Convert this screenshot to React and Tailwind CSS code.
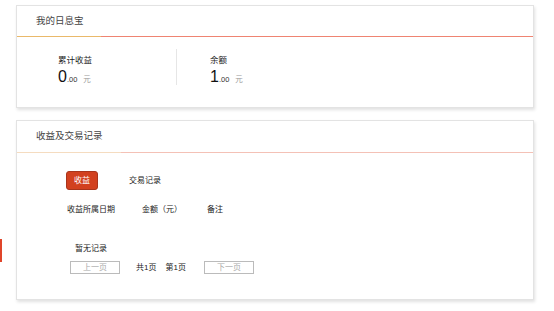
export default function App() {
  return (
    <div className="relative w-[554px] h-[311px] bg-white text-[#333] font-['Liberation_Sans','Noto_Sans_CJK_SC',sans-serif] pl-[16px] pt-[5px]">
      <div className="absolute left-0 top-[239px] w-[2px] h-[23px] bg-[#e0452a]" />
      {/* Card 1 */}
      <div className="w-[518px] h-[103px] border border-[#e3e3e3] bg-white shadow-[1px_2px_3px_rgba(0,0,0,0.12)] flex flex-col">
        <div className="h-[30px] flex items-center pl-[19px] text-[9.5px] text-[#444]">我的日息宝</div>
        <div className="flex h-px">
          <div className="w-[84px] bg-[#eab96a]" />
          <div className="flex-1 bg-[#ef8472]" />
        </div>
        <div className="flex pt-[17px] pl-[41px]">
          <div className="w-[118px] flex flex-col">
            <div className="text-[8.5px] leading-[12px] text-[#222]">累计收益</div>
            <div className="flex items-baseline mt-[2px]">
              <span className="text-[16px] leading-[17px] text-[#111]">0</span>
              <span className="text-[7.5px] text-[#333]">.00</span>
              <span className="text-[7.5px] text-[#999] ml-[6px]">元</span>
            </div>
          </div>
          <div className="w-px h-[36px] -mt-[5px] bg-[#e6e6e6]" />
          <div className="flex flex-col pl-[33px]">
            <div className="text-[8.5px] leading-[12px] text-[#222]">余额</div>
            <div className="flex items-baseline mt-[2px]">
              <span className="text-[16px] leading-[17px] text-[#111]">1</span>
              <span className="text-[7.5px] text-[#333]">.00</span>
              <span className="text-[7.5px] text-[#999] ml-[6px]">元</span>
            </div>
          </div>
        </div>
      </div>
      {/* Card 2 */}
      <div className="mt-[12px] w-[518px] h-[180px] border border-[#e3e3e3] bg-white shadow-[1px_2px_3px_rgba(0,0,0,0.12)] flex flex-col">
        <div className="h-[31px] flex items-center pl-[19px] text-[9.5px] text-[#444]">收益及交易记录</div>
        <div className="flex h-px">
          <div className="w-[104px] bg-[#f5dcc0]" />
          <div className="flex-1 bg-[#f4c1b6]" />
        </div>
        <div className="flex flex-col pl-[49px] pt-[18px] text-[#222]">
          <div className="flex items-center">
            <div className="w-[32px] h-[19px] rounded-[3px] bg-[#d2411f] border border-[#a8351c] text-white text-[8px] flex items-center justify-center">收益</div>
            <div className="ml-[31px] text-[8px]">交易记录</div>
          </div>
          <div className="flex items-center mt-[14px] text-[8px] leading-[12px] pl-[1px]">
            <div className="w-[75px]">收益所属日期</div>
            <div className="w-[65px]">金额（元）</div>
            <div>备注</div>
          </div>
          <div className="mt-[27px] pl-[9px] text-[8px] leading-[12px]">暂无记录</div>
          <div className="flex items-center mt-[6px] pl-[4px] text-[8px]">
            <div className="w-[50px] h-[13px] border border-[#bbb] text-[#aaa] flex items-center justify-center">上一页</div>
            <div className="ml-[16px]">共1页</div>
            <div className="ml-[9px]">第1页</div>
            <div className="ml-[18px] w-[50px] h-[13px] border border-[#bbb] text-[#aaa] flex items-center justify-center">下一页</div>
          </div>
        </div>
      </div>
    </div>
  );
}
